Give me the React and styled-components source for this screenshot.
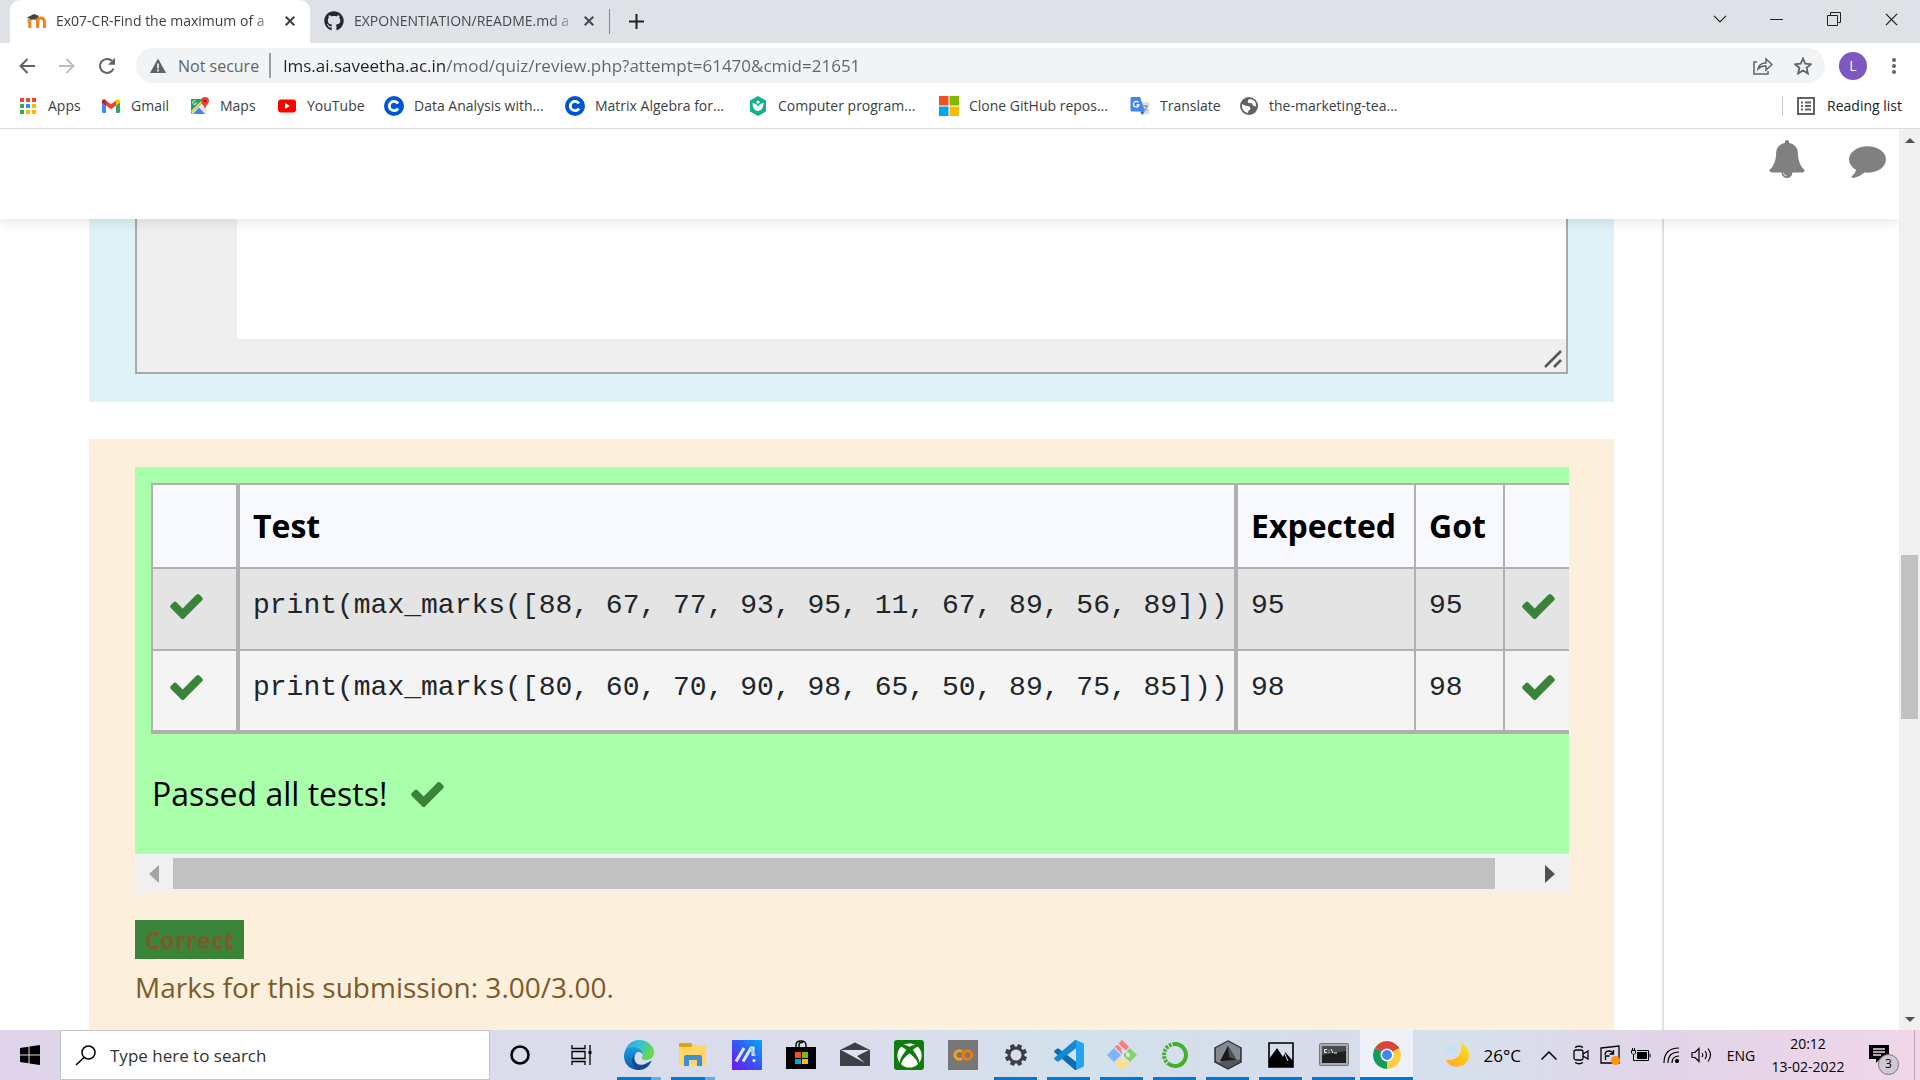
import React from "react";
import styled, { createGlobalStyle, css } from "styled-components";
import { FaGithub, FaXbox } from "react-icons/fa";

const ui = `"Open Sans", "Noto Sans", sans-serif`;
const mono = `"Liberation Mono", monospace`;

const GlobalStyle = createGlobalStyle`
  * { box-sizing: border-box; }
  body { margin: 0; font-family: ${ui}; color: #202124; background: #fff; overflow: hidden; }
  button, input { font-family: inherit; }
  button { border: 0; padding: 0; background: none; color: inherit; cursor: pointer; }
  a { color: inherit; text-decoration: none; }
  svg { display: block; flex: none; }
`;

const Screen = styled.div`
  display: flex;
  flex-direction: column;
  height: 100vh;
`;

/* ---------- Browser chrome ---------- */

const TabStrip = styled.div`
  display: flex;
  align-items: flex-start;
  height: 43px;
  padding-left: 10px;
  background: #dee1e6;
`;

const Tab = styled.div`
  display: flex;
  align-items: center;
  width: ${(p) => (p.$active ? 300 : 299)}px;
  height: 43px;
  padding: 0 12px 2px ${(p) => (p.$active ? 16 : 14)}px;
  gap: 10px;
  border-radius: 10px 10px 0 0;
  background: ${(p) => (p.$active ? "#fff" : "transparent")};
  color: ${(p) => (p.$active ? "#3c4043" : "#45494d")};
`;

const TabTitle = styled.span`
  flex: 1;
  white-space: nowrap;
  font-size: 14px;
  line-height: 20px;
  mask-image: linear-gradient(90deg, #000 90%, rgba(0, 0, 0, 0.3) 100%);
`;

const IconButton = styled.button`
  display: flex;
  align-items: center;
  justify-content: center;
  flex: none;
  width: ${(p) => p.$w || 20}px;
  height: ${(p) => p.$h || 20}px;
`;

const TabDivider = styled.span`
  width: 1px;
  height: 25px;
  margin-top: 9px;
  background: #80868b;
`;

const NewTab = styled(IconButton)`
  width: 52px;
  height: 42px;
`;

const WindowControls = styled.div`
  display: flex;
  margin-left: auto;
`;

const Toolbar = styled.div`
  display: flex;
  align-items: center;
  height: 45px;
  padding-left: 7px;
`;

const Address = styled.div`
  display: flex;
  flex: 1;
  align-items: center;
  height: 35px;
  margin-left: 9px;
  padding: 0 2px 0 14px;
  border-radius: 18px;
  background: #f1f3f4;
`;

const Security = styled.button`
  display: flex;
  align-items: center;
  gap: 12px;
  height: 25px;
  padding-right: 10px;
  border-right: 2px solid #9a9da1;
  color: #5f6368;
  font-size: 16px;
`;

const UrlInput = styled.input`
  flex: 1;
  min-width: 0;
  border: 0;
  padding: 0 0 0 12px;
  outline: 0;
  font-size: 17px;
  color: transparent;
  background: linear-gradient(90deg, #202124 175px, #5f6368 175px);
  background-clip: text;
`;

const Avatar = styled.button`
  width: 28px;
  height: 28px;
  margin-left: 14px;
  border-radius: 50%;
  background: #7e57c2;
  color: #fff;
  font-size: 14px;
`;

const Bookmarks = styled.nav`
  display: flex;
  align-items: center;
  height: 41px;
  padding: 0 18px 4px;
  border-bottom: 1px solid #dadce0;
`;

const Bookmark = styled.a`
  display: flex;
  align-items: center;
  gap: 10px;
  width: ${(p) => p.$w}px;
  white-space: nowrap;
  font-size: 14px;
  line-height: 20px;
  color: #3c4043;
`;

const ReadingList = styled.button`
  display: flex;
  align-items: center;
  gap: 12px;
  height: 20px;
  margin-left: auto;
  padding-left: 14px;
  border-left: 1px solid #c8cacd;
  font-size: 14px;
  line-height: 20px;
  color: #202124;
`;

/* ---------- Page ---------- */

const Viewport = styled.div`
  display: flex;
  flex: 1;
  min-height: 0;
`;

const Page = styled.div`
  display: flex;
  flex: 1;
  flex-direction: column;
  min-width: 0;
  overflow: hidden;
`;

const PageHeader = styled.header`
  position: relative;
  z-index: 1;
  display: flex;
  flex: none;
  justify-content: flex-end;
  gap: 43px;
  height: 90px;
  padding: 11px 13px 0;
  background: #fff;
  color: #808080;
  box-shadow: 0 5px 10px rgba(0, 0, 0, 0.08);
`;

const HeaderButton = styled.button`
  height: 38px;
`;

const Columns = styled.div`
  display: grid;
  grid-template-columns: 1fr 237px;
  flex: 1;
  min-height: 0;
`;

const Question = styled.main`
  min-width: 0;
  padding: 0 48px 0 89px;
  overflow: hidden;
`;

const Drawer = styled.aside`
  border-left: 2px solid #dee2e6;
`;

const Formulation = styled.section`
  padding: 0 46px 28px;
  background: #def2f8;
`;

const Editor = styled.div`
  border: 2px solid #a9a9a9;
  border-top: 0;
  background: #efefef;
`;

const CodeArea = styled.textarea`
  display: block;
  width: calc(100% - 100px);
  height: 120px;
  margin-left: 100px;
  border: 0;
  resize: none;
  outline: 0;
  background: #fff;
`;

const ResizeBar = styled.div`
  display: flex;
  align-items: center;
  justify-content: flex-end;
  height: 33px;
  padding: 6px 3px 0 0;
`;

const Feedback = styled.section`
  margin-top: 37px;
  padding: 28px 45px 60px 46px;
  background: #fcefdc;
  color: #7d5a29;
`;

const Results = styled.div`
  height: 387px;
  padding: 16px 0 0 16px;
  overflow: hidden;
  background: #aaffaa;
`;

const ResultTable = styled.table`
  width: 1438px;
  table-layout: fixed;
  border-collapse: collapse;
  border: 2px solid #b0b0b0;
  border-bottom-width: 4px;
  color: #212529;
`;

const Row = styled.tr`
  height: 82px;
  background: ${(p) => (p.$odd ? "#e4e4e4" : "#f4f4f4")};
`;

const cell = css`
  padding: 0 13px;
  border: 2px solid #b0b0b0;
  border-left-width: ${(p) => (p.$thick ? 4 : 2)}px;
  text-align: left;
  white-space: nowrap;
`;

const HeadCell = styled.th`
  ${cell}
  height: 84px;
  background: #f8f8ff;
  color: #000;
  font-size: 32px;
  line-height: 48px;
  font-weight: 700;
`;

const Cell = styled.td`
  ${cell}
  padding-bottom: 6px;
  font-family: ${mono};
  font-size: 28px;
  line-height: 40px;
`;

const TickCell = styled(Cell)`
  padding-left: 17px;
`;

const Passed = styled.p`
  display: flex;
  align-items: center;
  gap: 24px;
  margin: 36px 0 0;
  padding-left: 1px;
  color: #000;
  font-size: 32px;
  line-height: 48px;
`;

const HScroll = styled.div`
  display: flex;
  align-items: center;
  height: 39px;
  padding: 0 14px;
  background: #f0f0f0;
`;

const HTrack = styled.div`
  flex: 1;
  padding: 0 50px 0 14px;
`;

const HThumb = styled.div`
  height: 31px;
  background: #c1c1c1;
`;

const Badge = styled.div`
  width: fit-content;
  margin-top: 27px;
  padding: 0 10px;
  background: #398439;
  font-size: 24px;
  line-height: 39px;
  font-weight: 700;
`;

const Marks = styled.p`
  margin: 8px 0 0;
  font-size: 28px;
  line-height: 40px;
`;

const VScroll = styled.div`
  display: flex;
  flex-direction: column;
  align-items: center;
  width: 21px;
  padding: 9px 0 8px;
  background: #f0f0f0;
`;

const VTrack = styled.div`
  flex: 1;
  padding-top: 412px;
`;

const VThumb = styled.div`
  width: 17px;
  height: 164px;
  background: #c1c1c1;
`;

/* ---------- Taskbar ---------- */

const Taskbar = styled.footer`
  display: flex;
  flex: none;
  height: 50px;
  color: #000;
  background: linear-gradient(90deg, #e0d4ea 0%, #dadcec 27%, #dadcec 45%, #d2e1ec 57%, #d8dcea 69%, #d6e0ec 76%, #e2d4e8 87%, #f1d5e8 100%);
`;

const StartButton = styled(IconButton)`
  width: 60px;
  height: 50px;
`;

const SearchBox = styled.label`
  display: flex;
  align-items: center;
  gap: 14px;
  width: 430px;
  padding-left: 14px;
  border: 1px solid #c4c4c4;
  background: #fff;
`;

const SearchInput = styled.input`
  flex: 1;
  min-width: 0;
  border: 0;
  padding: 0;
  outline: 0;
  font-size: 17px;
  color: #333;
  &::placeholder { color: #333; opacity: 1; }
`;

const Task = styled.button`
  position: relative;
  display: flex;
  align-items: center;
  justify-content: center;
  width: ${(p) => p.$w || 53}px;
  background: ${(p) => (p.$active ? "#eef1f7" : "transparent")};
`;

const Running = styled.span`
  position: absolute;
  right: ${(p) => (p.$wide ? 0 : 5)}px;
  bottom: 0;
  left: ${(p) => (p.$wide ? 0 : 5)}px;
  height: 3px;
  background: ${(p) => (p.$stacked ? "linear-gradient(90deg, #0078d7 77%, #62aee8 77%)" : "#0078d7")};
`;

const Tray = styled.div`
  display: flex;
  align-items: center;
  margin-left: auto;
`;

const Weather = styled.button`
  display: flex;
  align-items: center;
  gap: 14px;
  margin-right: 11px;
  font-size: 17px;
`;

const Language = styled.button`
  width: 50px;
  font-size: 14px;
`;

const Clock = styled.time`
  width: 84px;
  text-align: center;
  font-size: 14px;
  line-height: 23px;
`;

const Notices = styled.button`
  position: relative;
  display: flex;
  align-items: flex-start;
  width: 64px;
  height: 50px;
  padding: 14px 0 0 19px;
`;

const Count = styled.span`
  position: absolute;
  top: 24px;
  left: 28px;
  width: 21px;
  height: 21px;
  border: 1px solid #777;
  border-radius: 50%;
  background: #d2c8d0;
  font-size: 12px;
  line-height: 18px;
  text-align: center;
`;

const ShowDesktop = styled.button`
  width: 6px;
  height: 50px;
  border-left: 1px solid #b5a5b0;
`;

/* ---------- Drawings ---------- */

const Svg = ({ w = 20, h, box = "0 0 20 20", children, ...rest }) => (
  <svg width={w} height={h || w} viewBox={box} fill="none" aria-hidden="true" {...rest}>{children}</svg>
);

const Cross = ({ s = 10, sw = 2 }) => (
  <Svg w={s} box="0 0 10 10" stroke="currentColor" strokeWidth={sw}><path d="M.7.7l8.6 8.6M9.3.7L.7 9.3" /></Svg>
);

const Tick = () => (
  <Svg w={33} h={25} box="121 334 1550 1188">
    <path fill="#398439" d="M1671 566q0 40-28 68l-724 724-136 136q-28 28-68 28t-68-28l-136-136-362-362q-28-28-28-68t28-68l136-136q28-28 68-28t68 28l294 295 656-657q28-28 68-28t68 28l136 136q28 28 28 68z" />
  </Svg>
);

const Moodle = () => (
  <Svg w={20} h={20}>
    <path d="M3.800 17V9.600q0-2 2.600-2.600 5.200 0 5.200 4V17M11.600 11q0-4 3.400-4t3.400 4v6" stroke="#f98012" strokeWidth="3" />
    <path d="M1 6.500l7-3.500 5 2-2 2.500-5 1z" fill="#444" />
    <path d="M2 6.500v6" stroke="#999" strokeWidth=".8" />
  </Svg>
);

const AppsGrid = () => {
  const c = ["#f44336", "#f44336", "#f44336", "#34a853", "#2196f3", "#fbbc04", "#34a853", "#fbbc04", "#fbbc04"];
  return <Svg w={20}>{c.map((f, i) => <rect key={i} x={2 + (i % 3) * 6} y={2 + Math.floor(i / 3) * 6} width="4" height="4" fill={f} />)}</Svg>;
};

const Gmail = () => (
  <Svg w={20}>
    <path d="M1 5v10.500q0 1.500 1.500 1.500H5V8z" fill="#4285f4" />
    <path d="M15 8v9h2.500q1.500 0 1.500-1.500V5z" fill="#34a853" />
    <path d="M5 4.500l5 3.800 5-3.800v5L10 13.300 5 9.500z" fill="#ea4335" />
    <path d="M1 5.500C1 3 3.500 2.700 5 4.200v5.300L1 6.700z" fill="#c5221f" />
    <path d="M19 5.500c0-2.500-2.500-2.800-4-1.300v5.300l4-2.800z" fill="#fbbc04" />
  </Svg>
);

const Maps = () => (
  <Svg w={20}>
    <path d="M1 3h14v15H1z" fill="#1fa463" />
    <path d="M1 18L15 4l2 2v12z" fill="#e8eaed" />
    <path d="M3 18l6-6.500 6 6.500z" fill="#4285f4" />
    <path d="M1 15L13 3h2.500L2 17z" fill="#ffd04b" />
    <path d="M15 1a4 4 0 0 1 4 4c0 3-3.200 4-4 8-.8-4-4-5-4-8a4 4 0 0 1 4-4z" fill="#ea4335" />
    <circle cx="15" cy="5" r="1.500" fill="#8c2018" />
    <path d="M5.800 5.200A1.900 1.900 0 1 0 6.300 7H4.600" stroke="#fff" strokeWidth=".8" />
  </Svg>
);

const YouTube = () => <Svg w={20}><rect x="1" y="3.500" width="18" height="13" rx="3" fill="#f00" /><path d="M8 7v6l5-3z" fill="#fff" /></Svg>;

const Coursera = () => (
  <Svg w={20}>
    <circle cx="10" cy="10" r="10" fill="#0056d2" />
    <path d="M14 7.500a4.700 4.700 0 1 0 0 5" stroke="#fff" strokeWidth="2.800" />
  </Svg>
);

const Programming = () => (
  <Svg w={20}>
    <path d="M10 0l8 4.500v11L10 20l-8-4.500v-11z" fill="#10b28b" />
    <path d="M4.500 7q4.500.5 5.500 4 1-3.500 5.500-4 0 7-5.500 8-5.500-1-5.500-8z" fill="#fff" />
    <circle cx="10" cy="6" r="1.600" fill="#fff" />
  </Svg>
);

const Squares = ({ s = 20 }) => (
  <Svg w={s} box="0 0 20 20">
    <path fill="#f25022" d="M0 0h9.500v9.500H0z" /><path fill="#7fba00" d="M10.500 0H20v9.500h-9.500z" />
    <path fill="#00a4ef" d="M0 10.500h9.500V20H0z" /><path fill="#ffb900" d="M10.500 10.500H20V20h-9.500z" />
  </Svg>
);

const Translate = () => (
  <Svg w={20}>
    <path d="M8 6h10q1.500 0 1.500 1.500V17q0 1.500-1.500 1.500h-6z" fill="#dfe1e5" />
    <path d="M2 1h8l5 14.500H2q-1.500 0-1.500-1.500V2.500Q.5 1 2 1z" fill="#4285f4" />
    <path d="M10 15.500h5l-3 3.500z" fill="#3367d6" />
    <path d="M8.500 6.500A2.800 2.800 0 1 0 9 9H6.500" stroke="#fff" strokeWidth="1.300" />
    <path d="M13 10h5M15.500 9v1M17 10q-1 3-3 4.500M14.500 12l3 3" stroke="#777" strokeWidth=".9" />
  </Svg>
);

const Globe = () => (
  <Svg w={20}>
    <circle cx="10" cy="10" r="9" fill="#5f6368" />
    <path d="M3 8q3 2 5 2 3 0 3.500 2 0 2-2 2.500L9 17q-5-1-6-6zM10 3q-2 2-1 3.500 1.500 1 4 .5 0 3 4 3.500Q17.500 5 13 3.500z" fill="#fff" />
  </Svg>
);

const Bell = () => (
  <Svg w={38} box="0 0 1792 1792">
    <path fill="currentColor" d="M912 1696q0-16-16-16-59 0-101.500-42.500t-42.500-101.500q0-16-16-16t-16 16q0 73 51.500 124.500t124.500 51.500q16 0 16-16zm816-288q0 52-38 90t-90 38h-448q0 106-75 181t-181 75-181-75-75-181h-448q-52 0-90-38t-38-90q50-42 91-88t85-119.500 74.500-158.500 50-206 19.500-260q0-152 117-282.500t307-158.500q-8-19-8-39 0-40 28-68t68-28 68 28 28 68q0 20-8 39 190 28 307 158.500t117 282.500q0 139 19.500 260t50 206 74.500 158.500 85 119.500 91 88z" />
  </Svg>
);

const Comment = () => (
  <Svg w={37} box="0 0 1792 1792">
    <path fill="currentColor" d="M1792 896q0 174-120 321.500t-326 233-450 85.500q-70 0-145-8-198 175-460 242-49 14-114 22-17 2-30.500-9t-17.500-29v-1q-3-4-.5-12t2-10 4.500-9.500l6-9 7-8.500 8-9q7-8 31-34.500t34.500-38 31-39.500 32.500-51 27-59 26-76q-157-89-247.500-220t-90.500-281q0-130 71-248.500t191-204.500 286-136.500 348-50.500q244 0 450 85.500t326 233 120 321.500z" />
  </Svg>
);

const Arrow = ({ dir, color = "#505050" }) => {
  const d = { up: "M0 5l5-5 5 5z", down: "M0 0l5 5 5-5z", left: "M10 0v18L0 9z", right: "M0 0v18l10-9z" }[dir];
  const flat = dir === "up" || dir === "down";
  return <Svg w={10} h={flat ? 5 : 18} box={flat ? "0 0 10 5" : "0 0 10 18"}><path d={d} fill={color} /></Svg>;
};

const Edge = () => (
  <Svg w={30} box="0 0 30 30">
    <defs>
      <linearGradient id="edgeTop" x1="0" y1="0" x2="1" y2=".4"><stop stopColor="#2c9fe0" /><stop offset=".5" stopColor="#31c3d8" /><stop offset="1" stopColor="#6ad94c" /></linearGradient>
      <linearGradient id="edgeLeft" x1="0" y1="0" x2="0" y2="1"><stop stopColor="#1b9de2" /><stop offset="1" stopColor="#0c59a4" /></linearGradient>
    </defs>
    <path d="M1 12C2 5 8 0 15 0c9 0 15 6 15 12.500 0 5-4 7.500-8 7.500-4.500 0-5-2-3.500-3.500C20 14 17 10 12 9 7 8 3 9 1 12z" fill="url(#edgeTop)" />
    <path d="M0 16C0 10 4 7 9 7c6 0 10 4 10 8-1-2.500-3-3.500-5-3-5 1-5 12 4 16l-3 2C6 30 0 24 0 16z" fill="url(#edgeLeft)" />
    <path d="M12 13c-5 4-1 15 9 11 3-1 5-3 6.500-3C25 27 20 30 15 30 8 29 5 18 12 13z" fill="#114a8b" />
  </Svg>
);

const Folder = () => (
  <Svg w={30} box="0 0 30 30">
    <path d="M1 4q0-1 1-1h11l2 3-2 3H1z" fill="#e2a20c" />
    <path d="M1 7h12l2-2h12q1 0 1 1v18q0 1-1 1H2q-1 0-1-1z" fill="#ffd565" />
    <path d="M6 17q0-2 2-2h14q2 0 2 2v9h-5v-6h-8v6H6z" fill="#3a8fd6" />
  </Svg>
);

const MyAsus = () => (
  <Svg w={30} box="0 0 30 30">
    <defs><linearGradient id="asus" x1="1" y1="0" x2="0" y2="1"><stop stopColor="#00a8ff" /><stop offset=".5" stopColor="#3557f4" /><stop offset="1" stopColor="#7413f0" /></linearGradient></defs>
    <path fill="url(#asus)" d="M0 0h30v30H0z" />
    <path d="M4 21.500L12 8M11 21.500L19 8h2v8" stroke="#dfe9ff" strokeWidth="3" /><path d="M19 8l4 8" stroke="#9fc4ff" strokeWidth="2" /><circle cx="22" cy="20.500" r="1.500" fill="#fff" />
  </Svg>
);

const Store = () => (
  <Svg w={30} box="0 0 30 30">
    <path d="M10 8V5q0-4 5-4t5 4v3M13 8V5q0-3 4-2.500" stroke="#000" strokeWidth="1.400" />
    <path d="M0 7h30v22H0z" fill="#000" />
    <path fill="#f25022" d="M9 12h6v6H9z" /><path fill="#7fba00" d="M16 12h6v6h-6z" /><path fill="#00a4ef" d="M9 19h6v5H9z" /><path fill="#ffb900" d="M16 19h6v5h-6z" />
  </Svg>
);

const Mail = () => (
  <Svg w={30} box="0 0 30 30">
    <path d="M0 10l15-7.500L30 10v16H0z" fill="#3f4045" />
    <path d="M1 10h28l-12 6 8 7L1 10z" fill="#dfe2ee" />
  </Svg>
);

const XboxBox = styled.span`
  display: flex;
  align-items: center;
  justify-content: center;
  width: 30px;
  height: 30px;
  border-radius: 3px;
  background: #107c10;
  color: #fff;
  font-size: 25px;
`;

const Colab = () => (
  <Svg w={30} box="0 0 30 30">
    <path fill="#777" d="M0 0h30v30H0z" />
    <path d="M14 11.700a4.300 4.300 0 1 0 0 6.600" stroke="#f9a01b" strokeWidth="3" /><circle cx="19.500" cy="15" r="4.200" stroke="#ee7d13" strokeWidth="3" />
  </Svg>
);

const Gear = () => (
  <Svg w={24} box="0 0 24 24">
    {[0, 45, 90, 135, 180, 225, 270, 315].map((a) => <path key={a} d="M9.800 1h4.400v5H9.800z" fill="#3c3e43" transform={`rotate(${a + 22} 12 12)`} />)}
    <circle cx="12" cy="12" r="7" stroke="#3c3e43" strokeWidth="3" />
  </Svg>
);

const VsCode = () => (
  <Svg w={30} box="0 0 30 30">
    <path d="M.6 10.600L3 8.700q1-.7 2 0L23 22.500V30h-2L.6 12.400q-1-.9 0-1.800z" fill="#0a6cb5" />
    <path d="M.6 19.400L3 21.300q1 .7 2 0L23 7.500V0h-2L.6 17.600q-1 .9 0 1.800z" fill="#1588d1" />
    <path d="M22 0l7 3q1 .5 1 1.500v21q0 1-1 1.500l-7 3z" fill="#23a4ee" />
  </Svg>
);

const Git = () => (
  <Svg w={30} box="0 0 30 30">
    <path d="M15 0l7 7-7 7-7-7z" fill="#ff7b7b" /><path d="M7 8l7 7-7 7-7-7z" fill="#80b3ff" />
    <path d="M23 8l7 7-7 7-7-7z" fill="#87d36b" /><path d="M15 16l7 7-7 7-7-7z" fill="#ffe07a" />
    <path d="M10 3l6 6v13M16 9l6 6" stroke="#dfe6ee" strokeWidth="1.500" /><circle cx="16" cy="10" r="2" fill="#dfe6ee" /><circle cx="21" cy="15" r="2" fill="#dfe6ee" /><circle cx="16" cy="21" r="2" fill="#dfe6ee" />
  </Svg>
);

const Anaconda = () => (
  <Svg w={28} box="0 0 28 28">
    <path d="M14 3a11 11 0 1 1-7 19.500" stroke="#43b02a" strokeWidth="4" />
    <path d="M14 3A11 11 0 0 0 7 22.500" stroke="#43b02a" strokeWidth="4" strokeDasharray="2.500 1.200" />
  </Svg>
);

const Hexagon = () => (
  <Svg w={30} box="0 0 30 30">
    <path d="M15 1l13 7v14l-13 7-13-7V8z" fill="#55595e" stroke="#35383c" strokeWidth="1.500" />
    <path d="M15 1.500L3 8v13l4 2 8-17 9 14 3-1V8z" fill="#858a90" />
    <path d="M15 6l8 14-16 1z" fill="#17191c" /><path d="M15 6l8 14-7-3z" fill="#4b5158" />
  </Svg>
);

const Photos = () => (
  <Svg w={26} box="0 0 26 26">
    <path d="M1 1h24v24H1z" stroke="#000" strokeWidth="1.600" />
    <path d="M1 17L9 6l6 9 2-5 8 9v6H1z" fill="#000" /><path d="M16 10l4 9" stroke="#d5deea" />
  </Svg>
);

const CmdIcon = () => (
  <Svg w={30} h={24} box="0 0 30 24">
    <rect x=".5" y=".5" width="29" height="22" rx="1" fill="#aaa" stroke="#777" />
    <path d="M3 3h24v17H3z" fill="#1d1f21" /><path d="M3 12l24-4V3H3z" fill="#4a4d50" />
    <path d="M8 6.500H5.500v3H8M10 7v.8M10 9v.8M12 6l2 4M15 10h3" stroke="#eee" />
  </Svg>
);

const Chrome = () => (
  <Svg w={28} box="0 0 28 28">
    <path d="M14 14L1.900 7A14 14 0 0 1 26.100 7z" fill="#db4437" />
    <path d="M14 14L26.100 7A14 14 0 0 1 14 28z" fill="#ffcd40" />
    <path d="M14 14v14A14 14 0 0 1 1.900 7z" fill="#0f9d58" />
    <path d="M14 7.500h12.400a14 14 0 0 0-.3-.5L25 5H14z" fill="#db4437" /><path d="M19.500 17.500L13.500 28H14l7-5z" fill="#ffcd40" />
    <circle cx="14" cy="14" r="6.500" fill="#fff" /><circle cx="14" cy="14" r="5" fill="#4285f4" />
  </Svg>
);

const Moon = () => (
  <Svg w={26} box="0 0 26 26">
    <defs><linearGradient id="moon" x1="1" y1="0" x2="0" y2="1"><stop stopColor="#ffe41c" /><stop offset="1" stopColor="#ffa51f" /></linearGradient></defs>
    <path d="M17 1c9 4 11 15 4 21C14 27 5 25 2 18c10 1 17-5 15-17z" fill="url(#moon)" />
    <path d="M2 11q-2-3 1.500-4 .5-4 4.500-3 3 1 3 3 3 1 1 4z" fill="#bfe3f5" />
  </Svg>
);

const Line = ({ w, h, box, sw = 1.5, children }) => (
  <Svg w={w} h={h} box={box} stroke="currentColor" strokeWidth={sw}>{children}</Svg>
);

/* ---------- Data ---------- */

const bookmarks = [
  ["Apps", AppsGrid, 83], ["Gmail", Gmail, 89], ["Maps", Maps, 87], ["YouTube", YouTube, 107],
  ["Data Analysis with...", Coursera, 181], ["Matrix Algebra for...", Coursera, 183],
  ["Computer program...", Programming, 191], ["Clone GitHub repos...", Squares, 191],
  ["Translate", Translate, 109], ["the-marketing-tea...", Globe, 180],
];

const results = [
  { test: "print(max_marks([88, 67, 77, 93, 95, 11, 67, 89, 56, 89]))", value: "95" },
  { test: "print(max_marks([80, 60, 70, 90, 98, 65, 50, 89, 75, 85]))", value: "98" },
];

const tasks = [
  { name: "Microsoft Edge", icon: <Edge />, w: 54, run: true, stacked: true },
  { name: "File Explorer", icon: <Folder />, w: 54, run: true, stacked: true },
  { name: "MyASUS", icon: <MyAsus />, w: 54 },
  { name: "Microsoft Store", icon: <Store />, w: 54 },
  { name: "Mail", icon: <Mail />, w: 54 },
  { name: "Xbox", icon: <XboxBox><FaXbox /></XboxBox>, w: 54 },
  { name: "Colab", icon: <Colab /> },
  { name: "Settings", icon: <Gear />, run: true },
  { name: "Visual Studio Code", icon: <VsCode />, run: true },
  { name: "Git", icon: <Git />, run: true },
  { name: "Anaconda", icon: <Anaconda />, run: true },
  { name: "Armoury", icon: <Hexagon />, run: true },
  { name: "Photos", icon: <Photos />, run: true },
  { name: "Command Prompt", icon: <CmdIcon />, run: true },
  { name: "Google Chrome", icon: <Chrome />, run: true, active: true },
];

/* ---------- Parts ---------- */

function BrowserChrome() {
  return (
    <>
      <TabStrip>
        <Tab $active>
          <Moodle />
          <TabTitle>Ex07-CR-Find the maximum of a</TabTitle>
          <IconButton $w={16} aria-label="Close tab"><Cross /></IconButton>
        </Tab>
        <Tab>
          <FaGithub size={20} color="#24292f" />
          <TabTitle>EXPONENTIATION/README.md a</TabTitle>
          <IconButton $w={16} aria-label="Close tab"><Cross /></IconButton>
        </Tab>
        <TabDivider />
        <NewTab aria-label="New tab"><Line w={15} box="0 0 15 15" sw={2}><path d="M7.500 0v15M0 7.500h15" /></Line></NewTab>
        <WindowControls>
          <IconButton $w={57} $h={38} aria-label="Search tabs"><Line w={14} h={8} box="0 0 14 8" sw={1.2}><path d="M1 .8l6 6 6-6" /></Line></IconButton>
          <IconButton $w={57} $h={38} aria-label="Minimize"><Line w={13} h={1} box="0 0 13 1" sw={2}><path d="M0 .5h13" /></Line></IconButton>
          <IconButton $w={57} $h={38} aria-label="Restore"><Line w={14} box="0 0 14 14" sw={1}><path d="M.5 3.500h10v10H.5zM3.500 3.500v-3h10v10h-3" /></Line></IconButton>
          <IconButton $w={58} $h={38} aria-label="Close window"><Cross s={13} sw={1} /></IconButton>
        </WindowControls>
      </TabStrip>
      <Toolbar>
        <IconButton $w={40} $h={36} aria-label="Back"><Line w={16} box="0 0 16 16" sw={2}><path stroke="#5f6368" d="M16 8H1.500M8.500 1L1.500 8l7 7" /></Line></IconButton>
        <IconButton $w={40} $h={36} aria-label="Forward"><Line w={16} box="0 0 16 16" sw={2}><path stroke="#bdc1c6" d="M0 8h14.500M7.500 1l7 7-7 7" /></Line></IconButton>
        <IconButton $w={40} $h={36} aria-label="Reload">
          <Svg w={18} box="0 0 18 18"><path d="M15.500 11.500A7 7 0 1 1 14 4" stroke="#5f6368" strokeWidth="2" /><path d="M17 .8v7h-7z" fill="#5f6368" /></Svg>
        </IconButton>
        <Address>
          <Security>
            <Svg w={16} h={15} box="0 0 16 15"><path d="M8 .5L16 15H0z" fill="#5f6368" /><path d="M8 5.500v5M8 11.500v2" stroke="#fff" strokeWidth="1.600" /></Svg>
            Not secure
          </Security>
          <UrlInput aria-label="Address" defaultValue="lms.ai.saveetha.ac.in/mod/quiz/review.php?attempt=61470&cmid=21651" />
          <IconButton $w={40} aria-label="Share"><Line w={20} h={18} box="0 0 20 18"><path stroke="#5f6368" d="M4 5H1v12h14v-3M5 12q1-6 8-6V2l6 5.500-6 5.500V9q-5-.5-8 3z" /></Line></IconButton>
          <IconButton $w={40} aria-label="Bookmark this page"><Line w={18} box="0 0 18 18" sw={1.8}><path stroke="#5f6368" d="M9 1.500l2.200 5.200 5.700.5-4.300 3.700 1.300 5.600L9 13.500l-4.900 3 1.300-5.600L1.100 7.200l5.700-.5z" /></Line></IconButton>
        </Address>
        <Avatar aria-label="Profile">L</Avatar>
        <IconButton $w={53} $h={36} aria-label="Menu"><Svg w={4} h={16} box="0 0 4 16" fill="#5f6368"><circle cx="2" cy="2" r="2" fill="#5f6368" /><circle cx="2" cy="8" r="2" fill="#5f6368" /><circle cx="2" cy="14" r="2" fill="#5f6368" /></Svg></IconButton>
      </Toolbar>
      <Bookmarks aria-label="Bookmarks">
        {bookmarks.map(([name, Icon, w]) => <Bookmark href="#" key={name} $w={w}><Icon />{name}</Bookmark>)}
        <ReadingList>
          <Line w={18} box="0 0 18 18" sw={2}><path stroke="#5f6368" d="M1 1h16v16H1zM4 5.500h2M8 5.500h6M4 9h2M8 9h6M4 12.500h2M8 12.500h6" /></Line>
          Reading list
        </ReadingList>
      </Bookmarks>
    </>
  );
}

function Review() {
  return (
    <Question>
      <Formulation>
        <Editor>
          <CodeArea aria-label="Answer" />
          <ResizeBar><Line w={20} box="0 0 20 20" sw={2.5}><path stroke="#555" d="M2 18L18 2M11 18l7-7" /></Line></ResizeBar>
        </Editor>
      </Formulation>
      <Feedback>
        <Results>
          <ResultTable>
            <colgroup><col width="86" /><col width="998" /><col width="179" /><col width="89" /><col width="86" /></colgroup>
            <thead>
              <tr><HeadCell /><HeadCell $thick>Test</HeadCell><HeadCell $thick>Expected</HeadCell><HeadCell>Got</HeadCell><HeadCell /></tr>
            </thead>
            <tbody>
              {results.map((r, i) => (
                <Row key={r.test} $odd={i === 0}>
                  <TickCell><Tick /></TickCell>
                  <Cell $thick>{r.test}</Cell>
                  <Cell $thick>{r.value}</Cell>
                  <Cell>{r.value}</Cell>
                  <TickCell><Tick /></TickCell>
                </Row>
              ))}
            </tbody>
          </ResultTable>
          <Passed>Passed all tests! <Tick /></Passed>
        </Results>
        <HScroll>
          <Arrow dir="left" color="#a3a3a3" />
          <HTrack><HThumb /></HTrack>
          <Arrow dir="right" />
        </HScroll>
        <Badge>Correct</Badge>
        <Marks>Marks for this submission: 3.00/3.00.</Marks>
      </Feedback>
    </Question>
  );
}

function SystemBar() {
  return (
    <Taskbar>
      <StartButton aria-label="Start"><Svg w={20}><path fill="#000" d="M0 3l8.500-1.200V9.500H0zM9.500 1.600L20 0v9.500H9.500zM0 10.500h8.500v7.700L0 17zM9.500 10.500H20V20L9.500 18.400z" /></Svg></StartButton>
      <SearchBox>
        <Line w={21} box="0 0 21 21"><circle cx="13.500" cy="7.500" r="6.500" /><path d="M9 12.500L1 20" /></Line>
        <SearchInput placeholder="Type here to search" aria-label="Type here to search" />
      </SearchBox>
      <Task $w={60} aria-label="Cortana"><Line w={20} box="0 0 20 20" sw={2.6}><circle cx="10" cy="10" r="8.500" /></Line></Task>
      <Task $w={62} aria-label="Task View"><Line w={21} h={20} box="0 0 21 20" sw={1.3}><path d="M1 0v3.500h13V0M1 20v-3.500h13V20M1 6.500h13v7H1zM19 0v20" /><path d="M17.500 6h3v3h-3z" fill="#000" stroke="none" /></Line></Task>
      {tasks.map((t) => (
        <Task key={t.name} $w={t.w} $active={t.active} aria-label={t.name}>
          {t.icon}
          {t.run && <Running $stacked={t.stacked} $wide={t.active} />}
        </Task>
      ))}
      <Tray>
        <Weather><Moon />26°C</Weather>
        <IconButton $w={34} aria-label="Hidden icons"><Line w={16} h={9} box="0 0 16 9"><path d="M.5 8.500L8 1l7.500 7.500" /></Line></IconButton>
        <IconButton $w={29} aria-label="Meet now"><Line w={16} h={20} box="0 0 16 20" sw={1.3}><rect x="1" y="5" width="9" height="10" rx="2" /><path d="M10 9l5-3v8l-5-3M2 2.500q4-2.500 8 0M2 17.500q4 2.500 8 0" /></Line></IconButton>
        <IconButton $w={30} aria-label="Updates"><Line w={20} box="0 0 20 20" sw={1.3}><path d="M1 3l18-2v17H1zM5 10q0-4 4-4 3 0 4 2.500M13.500 5v4h-4M5.500 15v-4h4" /><circle cx="15.500" cy="15.500" r="4.500" fill="#ff9500" stroke="none" /></Line></IconButton>
        <IconButton $w={31} aria-label="Battery"><Line w={20} h={14} box="0 0 20 14" sw={1}><path d="M6 2.500h11.500v10H4.500M19 5.500v4M1.500 0v2M3.500 0v2M.5 2.500h4v2.500L3 6.500H2L.5 5zM2.500 6.500v6h2" /><path d="M6.500 4.500h9v6h-9z" fill="#000" /></Line></IconButton>
        <IconButton $w={30} aria-label="Wi-Fi"><Line w={16} h={16} box="0 0 16 16" sw={1.2}><path d="M1 16Q1 1 16 1M5 16Q5 5 16 5M9 16q0-7 7-7" /><circle cx="14" cy="14" r="1.500" fill="#000" /></Line></IconButton>
        <IconButton $w={30} aria-label="Volume"><Line w={21} h={16} box="0 0 21 16" sw={1.2}><path d="M1 5.500h3l4-4v13l-4-4H1zM11 6q1.500 2 0 4M14 4q3 4 0 8M17 1.500q5 6.500 0 13" /></Line></IconButton>
        <Language>ENG</Language>
        <Clock>20:12<br />13-02-2022</Clock>
        <Notices aria-label="Notifications">
          <Svg w={20}><path d="M0 1h20v14h-9l-4 4v-4H0z" fill="#000" /><path d="M4 5h12M4 8h12M4 11h8" stroke="#f0d5e8" strokeWidth="1.300" /></Svg>
          <Count>3</Count>
        </Notices>
        <ShowDesktop aria-label="Show desktop" />
      </Tray>
    </Taskbar>
  );
}

export default function App() {
  return (
    <Screen>
      <GlobalStyle />
      <BrowserChrome />
      <Viewport>
        <Page>
          <PageHeader>
            <HeaderButton aria-label="Notifications"><Bell /></HeaderButton>
            <HeaderButton aria-label="Messages"><Comment /></HeaderButton>
          </PageHeader>
          <Columns><Review /><Drawer /></Columns>
        </Page>
        <VScroll>
          <Arrow dir="up" />
          <VTrack><VThumb /></VTrack>
          <Arrow dir="down" />
        </VScroll>
      </Viewport>
      <SystemBar />
    </Screen>
  );
}
